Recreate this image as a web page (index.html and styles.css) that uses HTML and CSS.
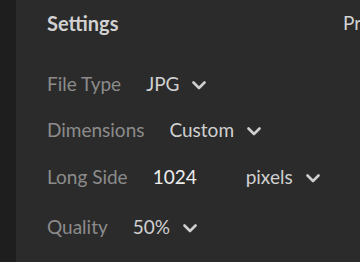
FILE: index.html
```html
<!DOCTYPE html>
<html>
<head>
<meta charset="utf-8">
<link rel="stylesheet" href="styles.css">
</head>
<body>
<div class="rail"></div>
<main class="panel">
  <header class="head">
    <h2 class="title">Settings</h2>
    <span class="other">Preview</span>
  </header>
  <div class="row row-short">
    <span class="label">File Type</span>
    <span class="value">JPG</span>
    <svg class="chev" viewBox="0 0 14 9"><path d="M1.5 1.5 L7 7 L12.5 1.5"/></svg>
  </div>
  <div class="row">
    <span class="label">Dimensions</span>
    <span class="value">Custom</span>
    <svg class="chev" viewBox="0 0 14 9"><path d="M1.5 1.5 L7 7 L12.5 1.5"/></svg>
  </div>
  <div class="row row-tall">
    <span class="label">Long Side</span>
    <span class="value input">1024</span>
    <span class="value">pixels</span>
    <svg class="chev" viewBox="0 0 14 9"><path d="M1.5 1.5 L7 7 L12.5 1.5"/></svg>
  </div>
  <div class="row">
    <span class="label">Quality</span>
    <span class="value">50%</span>
    <svg class="chev" viewBox="0 0 14 9"><path d="M1.5 1.5 L7 7 L12.5 1.5"/></svg>
  </div>
</main>
</body>
</html>
```

FILE: styles.css
```css
html, body {
  margin: 0;
  padding: 0;
}
body {
  width: 360px;
  height: 262px;
  overflow: hidden;
  display: flex;
  background: #2b2b2b;
  font-family: Lato, "Open Sans", sans-serif;
  font-size: 19px;
  line-height: 22px;
}
.rail {
  width: 16px;
  flex: none;
  background: #1e1e1e;
}
.panel {
  flex: 1;
  padding: 12px 0 0 31px;
  min-width: 0;
  overflow: hidden;
}
.head {
  display: grid;
  grid-template-columns: 296px auto;
  margin-bottom: 39px;
}
.title {
  margin: 0;
  font-size: 20px;
  font-weight: 700;
  color: #d2d2d2;
}
.other {
  color: #d2d2d2;
  white-space: nowrap;
  overflow: hidden;
}
.row {
  display: flex;
  align-items: flex-start;
  height: 47px;
}
.row-short {
  height: 46px;
}
.row-tall {
  height: 50px;
}
.label {
  color: #8c8c8c;
  margin-right: 25px;
}
.value {
  color: #d0d0d0;
}
.input {
  color: #ededed;
  width: 93px;
}
.chev {
  width: 14px;
  height: 9px;
  margin: 8px 0 0 13px;
  fill: none;
  stroke: #cfcfcf;
  stroke-width: 2.6;
  stroke-linecap: round;
  stroke-linejoin: round;
}
```
